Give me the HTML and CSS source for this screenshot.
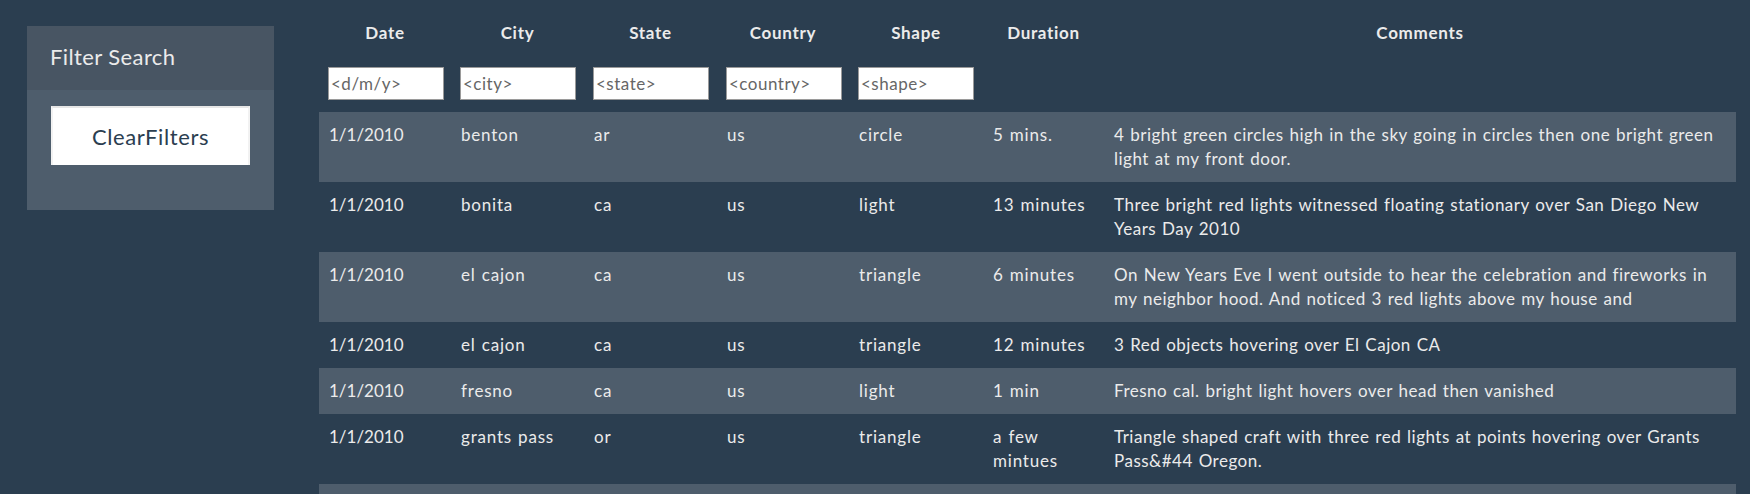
FILE: index.html
```html
<!DOCTYPE html>
<html lang="en">
<head>
<meta charset="utf-8">
<title>UFO Sightings</title>
<link rel="stylesheet" href="styles.css">
</head>
<body>
<div class="layout">
  <aside class="sidebar">
    <div class="panel">
      <div class="panel-heading">Filter Search</div>
      <div class="panel-body">
        <button class="btn-clear" type="button">ClearFilters</button>
      </div>
    </div>
  </aside>
  <main class="content">
    <table class="ufo-table">
      <colgroup>
        <col class="c-date"><col class="c-city"><col class="c-state"><col class="c-country"><col class="c-shape"><col class="c-duration"><col class="c-comments">
      </colgroup>
      <thead>
        <tr class="head-row">
          <th>Date</th><th>City</th><th>State</th><th>Country</th><th>Shape</th><th>Duration</th><th>Comments</th>
        </tr>
        <tr class="filter-row">
          <td><input class="filter" type="text" placeholder="&lt;d/m/y&gt;"></td>
          <td><input class="filter" type="text" placeholder="&lt;city&gt;"></td>
          <td><input class="filter" type="text" placeholder="&lt;state&gt;"></td>
          <td><input class="filter" type="text" placeholder="&lt;country&gt;"></td>
          <td><input class="filter" type="text" placeholder="&lt;shape&gt;"></td>
          <td></td>
          <td></td>
        </tr>
      </thead>
      <tbody>
        <tr><td>1/1/2010</td><td>benton</td><td>ar</td><td>us</td><td>circle</td><td>5 mins.</td><td class="comment">4 bright green circles high in the sky going in circles then one bright green light at my front door.</td></tr>
        <tr><td>1/1/2010</td><td>bonita</td><td>ca</td><td>us</td><td>light</td><td>13 minutes</td><td class="comment">Three bright red lights witnessed floating stationary over San Diego New Years Day 2010</td></tr>
        <tr><td>1/1/2010</td><td>el cajon</td><td>ca</td><td>us</td><td>triangle</td><td>6 minutes</td><td class="comment">On New Years Eve I went outside to hear the celebration and fireworks in my neighbor hood. And noticed 3 red lights above my house and</td></tr>
        <tr><td>1/1/2010</td><td>el cajon</td><td>ca</td><td>us</td><td>triangle</td><td>12 minutes</td><td class="comment">3 Red objects hovering over El Cajon CA</td></tr>
        <tr><td>1/1/2010</td><td>fresno</td><td>ca</td><td>us</td><td>light</td><td>1 min</td><td class="comment">Fresno cal. bright light hovers over head then vanished</td></tr>
        <tr><td>1/1/2010</td><td>grants pass</td><td>or</td><td>us</td><td>triangle</td><td>a few mintues</td><td class="comment">Triangle shaped craft with three red lights at points hovering over Grants Pass&amp;#44 Oregon.</td></tr>
        <tr><td>1/1/2010</td><td>hayward</td><td>ca</td><td>us</td><td>light</td><td>5 minutes</td><td class="comment">Orange lights moving across the sky in a line</td></tr>
      </tbody>
    </table>
  </main>
</div>
</body>
</html>
```
FILE: styles.css
```css
html, body {
  margin: 0;
  padding: 0;
  background: #2b3e50;
}

body {
  font-family: "Lato", "Open Sans", sans-serif;
  font-size: 17px;
  line-height: 24px;
  color: #ebebeb;
}

.layout {
  display: flex;
  align-items: flex-start;
  padding-left: 27px;
  padding-right: 14px;
  gap: 45px;
}

.sidebar {
  flex: 0 0 247px;
  padding-top: 26px;
}

.panel {
  background: #4e5d6c;
}

.panel-heading {
  background: #485563;
  height: 64px;
  box-sizing: border-box;
  padding: 16px 23px 0;
  font-size: 22px;
  line-height: 30px;
  letter-spacing: 0.4px;
  color: #ebebeb;
}

.panel-body {
  padding: 16px 24px 45px;
}

.btn-clear {
  display: block;
  width: 199px;
  height: 59px;
  margin: 0;
  background: #ffffff;
  border: 0;
  border-top: 2px solid #e6e6e6;
  border-left: 2px solid #f2f2f2;
  border-right: 2px solid #f2f2f2;
  color: #2b3e50;
  font-family: "Lato", "Open Sans", sans-serif;
  font-size: 22px;
  letter-spacing: 0.6px;
  padding: 0;
}

.content {
  flex: 1 1 auto;
}

.ufo-table {
  width: 1417px;
  table-layout: fixed;
  border-collapse: collapse;
  border-spacing: 0;
}

.c-date { width: 132px; }
.c-city { width: 133px; }
.c-state { width: 133px; }
.c-country { width: 132px; }
.c-shape { width: 134px; }
.c-duration { width: 121px; }
.c-comments { width: 632px; }

.head-row th {
  padding: 21px 10px 8px;
  text-align: center;
  font-weight: 700;
  letter-spacing: 0.7px;
  color: #ebebeb;
}

.filter-row td {
  padding: 14px 9px 12px;
}

.filter {
  display: block;
  width: 116px;
  height: 33px;
  box-sizing: border-box;
  margin: 0;
  padding: 0 2px;
  border: 1px solid #9a9a9a;
  background: #ffffff;
  font-family: "Lato", "Open Sans", sans-serif;
  font-size: 17px;
  letter-spacing: 0.5px;
  color: #333;
}

.filter::placeholder {
  color: #666666;
}

tbody td {
  padding: 11px 10px;
  vertical-align: top;
  text-align: left;
  letter-spacing: 0.8px;
  word-spacing: 1px;
}

tbody td:first-child {
  letter-spacing: 0;
  word-spacing: 0;
}

tbody td.comment {
  padding-right: 16px;
  letter-spacing: 0.5px;
  word-spacing: 1px;
}

tbody tr:nth-child(odd) {
  background: #4e5d6c;
}
```
